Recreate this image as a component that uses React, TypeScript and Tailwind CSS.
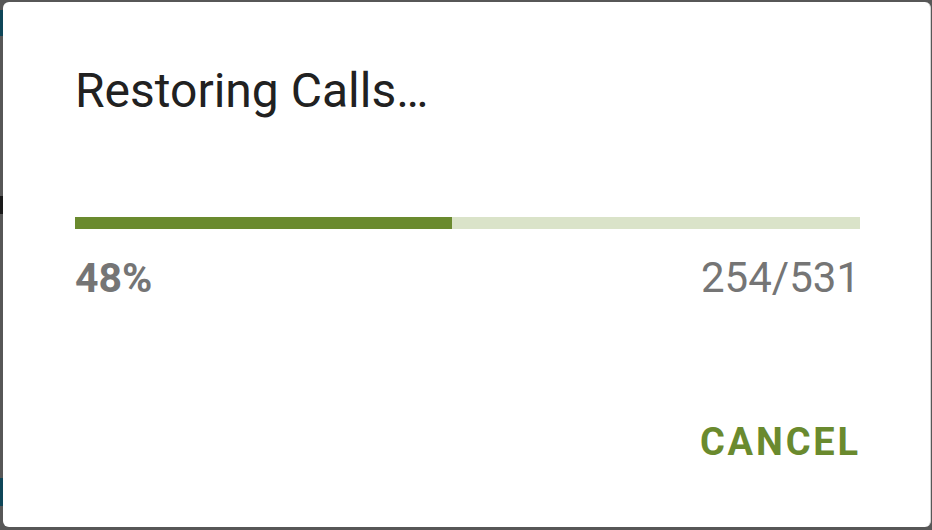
import React from "react";

export default function App() {
  const done = 254;
  const total = 531;
  const pct = Math.round((done / total) * 100);
  return (
    <div
      className="relative w-[932px] h-[530px] bg-[#575757] pt-[2px] pl-[3px] pb-[3px] overflow-hidden"
      style={{ fontFamily: "Roboto, 'Noto Sans', sans-serif" }}
    >
      <div className="absolute left-0 top-[10px] w-[3px] h-[26px] bg-[#0f4658]" />
      <div className="absolute left-0 top-[196px] w-[3px] h-[18px] bg-[#1a1a1a]" />
      <div className="absolute left-0 top-[478px] w-[3px] h-[28px] bg-[#0f4658]" />
      <div className="w-[928px] h-[525px] bg-white rounded-[6px] border-r border-[#d4d4d4] flex flex-col pl-[72px] pr-[70px] pt-[61px]">
        <div className="text-[48px] leading-[56px] text-[#212121]">Restoring Calls…</div>
        <div className="mt-[98px] h-[12px] w-full bg-[#dae3c9] flex">
          <div className="h-full bg-[#6a8a2e]" style={{ width: `${pct}%` }} />
        </div>
        <div className="mt-[25px] flex justify-between items-baseline leading-[48px] text-[#757575]">
          <span className="font-bold text-[41px]">{pct}%</span>
          <span className="text-[42px]">
            {done}/{total}
          </span>
        </div>
        <div className="mt-[118px] flex justify-end">
          <span className="text-[38px] leading-[44px] font-bold tracking-[0.075em] text-[#6a8a2e] mr-[-1px]">
            CANCEL
          </span>
        </div>
      </div>
    </div>
  );
}
